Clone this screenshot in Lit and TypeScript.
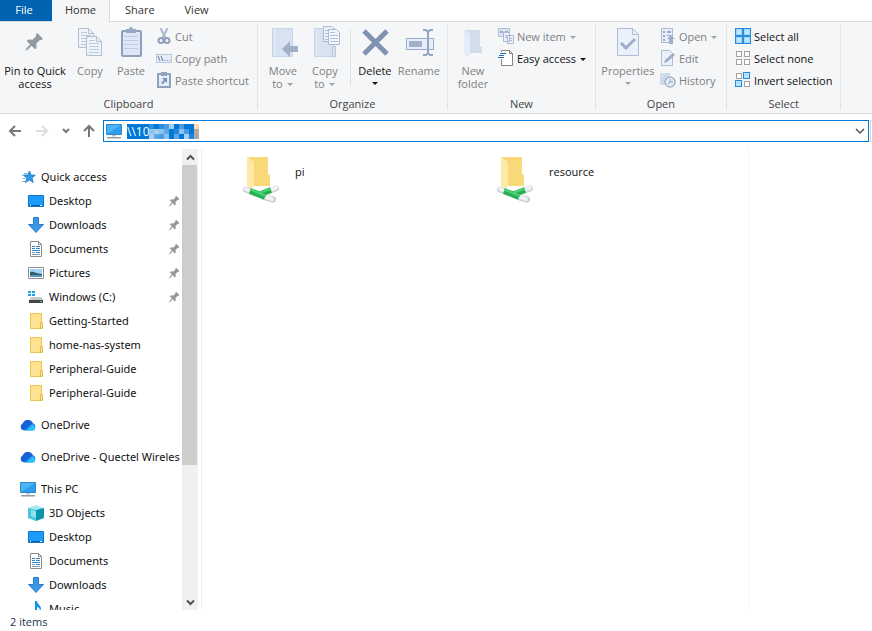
import { LitElement, html, css, svg, nothing, TemplateResult } from "lit";
import { customElement } from "lit/decorators.js";

const icon = (w: number, h: number, body: TemplateResult) =>
  html`<svg width=${w} height=${h} viewBox="0 0 ${w} ${h}" aria-hidden="true">${body}</svg>`;

const pinShape = svg`<g transform="rotate(45 10 10)" fill="#9199a1"><path d="M6 0h8v2l-1.300 1v5l3.300 3v2H4v-2l3.300-3V3L6 2z"/><path d="M9 12h2v6l-1 3-1-3z"/></g>`;
const smallPin = html`<svg class="pin" width="12" height="12" viewBox="-1 -1 20 20" aria-hidden="true">${pinShape}</svg>`;

const page = (x: number, y: number) => svg`<g transform="translate(${x} ${y})"><path d="M.5.500h10l5 5v14H.500z" fill="#eef3fb" stroke="#a9bad3"/><path d="M10.500.500v5h5" fill="none" stroke="#a9bad3"/><path d="M3 4.500h6M3 7.500h10M3 10.500h10M3 13.500h10M3 16.500h10" stroke="#b9c8de"/></g>`;
const sheet = svg`<path d="M.5.500h20v28H.500z" fill="#d5e1f1" stroke="#c3d2e6"/><path d="M3 1v27" stroke="#e2eaf6"/>`;

const big = {
  pin: icon(32, 32, svg`<g transform="translate(4 7)">${pinShape}</g>`),
  copy: icon(32, 32, svg`${page(4, 2)}${page(12, 10)}`),
  paste: icon(32, 32, svg`<rect x="7" y="5" width="19" height="25" rx="1" fill="#dbe6f5" stroke="#8497ba" stroke-width="2"/><path d="M11 3h3a2 2 0 0 1 4 0h3v4H11z" fill="#8fa1c1"/><path d="M9 10.500h14M9 14.500h14M9 18.500h14M9 22.500h14" stroke="#b9c9e0"/>`),
  move: icon(32, 32, svg`<g transform="translate(5 2)">${sheet}</g><path d="M15 23l8-8v5h8v6h-8v5z" fill="#98a9c6"/>`),
  copyTo: icon(32, 32, svg`<g transform="translate(5 2)">${sheet}</g><path d="M14.500.500h8l3 3v12h-11z" fill="#eef3fb" stroke="#a3b4ce"/><path d="M19.500 3.500h8l3 3v12h-11z" fill="#f3f7fd" stroke="#a3b4ce"/><path d="M16 4.500h3M16 7.500h3M16 10.500h3M16 13.500h3M21 6.500h5M21 9.500h8M21 12.500h8M21 15.500h8" stroke="#a9bad3"/><path d="M23.500 20.500h3v10h-3z" fill="#d5e1f1" stroke="#b3c3da"/>`),
  remove: icon(32, 32, svg`<path d="M5 5l23 23M28 5L5 28" stroke="#8192b3" stroke-width="5"/>`),
  rename: icon(32, 32, svg`<rect x="3.500" y="12.500" width="27" height="11" fill="#e6eefa" stroke="#8fa3c8"/><path d="M6 15h13v6H6z" fill="#9aabca"/><path d="M20 4h3l2 2 2-2h3M25 6v22M20 29h3l2-2 2 2h3" fill="none" stroke="#8b9dbf" stroke-width="2"/>`),
  folder: icon(32, 32, svg`<path d="M7 4h16v16l2 1v6H10z" fill="#cfdbe9"/><path d="M7 4l6 4v21l-3 2-3-3z" fill="#e3ecf7"/>`),
  properties: icon(32, 32, svg`<path d="M5.500 2.500h15l6 6v21h-21z" fill="#eaf1fb" stroke="#a5b6d0"/><path d="M20.500 2.500v6h6" fill="none" stroke="#a5b6d0"/><path d="M9 17l5 5 9-9" fill="none" stroke="#94a6c6" stroke-width="3"/>`),
};

const box = (x: number, y: number, on: boolean) =>
  svg`<rect x=${x + 0.5} y=${y + 0.5} width=${on ? 6 : 5} height=${on ? 6 : 5} fill=${on ? "#b7e1fc" : "#fff"} stroke=${on ? "#2b8cdc" : "#a2a2a2"}/>`;
const small = {
  cut: icon(16, 16, svg`<path d="M4.500 0l5 10M11.500 0l-5 10" stroke="#a4b3cb" stroke-width="2"/><circle cx="5" cy="12.500" r="2.500" fill="none" stroke="#8497b8" stroke-width="2"/><circle cx="11" cy="12.500" r="2.500" fill="none" stroke="#8497b8" stroke-width="2"/>`),
  path: icon(16, 16, svg`<rect x=".5" y="4.500" width="15" height="8" fill="#e6edf8" stroke="#b5c4db"/><path d="M2 6l2 5M5 6l2 5M8.500 10.500h1M11 10.500h1M13.300 10.500h1" stroke="#6e86ad" stroke-width="1.200"/>`),
  shortcut: icon(16, 16, svg`<rect x="2" y="2" width="12" height="13" fill="#e3ecf8" stroke="#8799ba" stroke-width="2"/><path d="M5 0h6v4H5z" fill="#8799ba"/><path d="M6 6h5v5L9.300 9.300 7 12 5 11l3-3z" fill="#7287ae"/>`),
  newItem: icon(16, 16, svg`<path d="M.5.500h11v8H.500z" fill="#d9e3f1" stroke="#a9b9d0"/><path d="M2 3h3v2H2zM7 3h3v2H7z" fill="#91a4c3"/><path d="M5.500 4.500h6v9h-6zM9.500 7.500h6v8h-6z" fill="#eef3fb" stroke="#a3b4ce"/><path d="M7 7.500h2M7 9.500h2M11 10.500h3M11 12.500h3" stroke="#a3b4ce"/>`),
  easy: icon(16, 16, svg`<path d="M3.500.500h8l3 3v12h-11z" fill="#fff" stroke="#858585"/><path d="M11.500.500v3h3" fill="none" stroke="#858585"/><path d="M1 2h7v7H0z" fill="#fff"/><path d="M2 3.500h6M1 5.500h5M0 7.500h6" stroke="#1e6fc0"/>`),
  open: icon(16, 16, svg`<path d="M1.500.500h11v14h-11z" fill="#e8effa" stroke="#a4b5cf"/><path d="M3 3h2v2H3zM3 7h2v2H3zM3 11h2v2H3zM7 3h4v2H7zM7 7h4v1H7z" fill="#8b9fbf"/><path d="M11 7l4 4h-2v5H9v-5H7z" fill="#96a8c7"/>`),
  edit: icon(16, 16, svg`<path d="M1.500.500h8l3 3v12h-11z" fill="#eaf1fb" stroke="#a9bad3"/><path d="M4 13l1-3 8-7 2 2-8 7z" fill="#94a6c5"/>`),
  history: icon(16, 16, svg`<path d="M0 1h10v12H0z" fill="#cbd8ea"/><circle cx="10" cy="10" r="5" fill="#e3ebf6" stroke="#9aabc7" stroke-width="1.500"/><path d="M10 7v3h3M10 10l-2 2" fill="none" stroke="#8396b8"/>`),
  all: icon(16, 16, svg`<path d="M0 0h16v16H0z" fill="#2b8cdc"/><path d="M1 1h6v6H1zM9 1h6v6H9zM1 9h6v6H1zM9 9h6v6H9z" fill="#9fd8fb"/><path d="M2 2h4v4H2zM10 2h4v4h-4zM2 10h4v4H2zM10 10h4v4h-4z" fill="#c3e8fd"/>`),
  none: icon(16, 16, svg`${box(1, 1, false)}${box(9, 1, false)}${box(1, 9, false)}${box(9, 9, false)}`),
  invert: icon(16, 16, svg`${box(1, 1, false)}${box(8, 0, true)}${box(0, 8, true)}${box(9, 9, false)}`),
};

const monitor = icon(16, 16, svg`<path d="M.5 1.500h15v10H.500z" fill="#4cb5f8" stroke="#3286c6"/><path d="M1 11L15 2v9z" fill="#2d9df0"/><path d="M6 12h4v1.500H6z" fill="#b9c4cd"/><path d="M1 14h14v1.500H1z" fill="#8e9fac"/>`);
const cloud = icon(16, 16, svg`<path d="M4 13.500a4 4 0 0 1-1-7.300 5.300 5.300 0 0 1 9.700-.200A4 4 0 0 1 13 13.500z" fill="#1c86ee"/><path d="M3 6.200a5.300 5.300 0 0 1 9.600-.400L5 12.800 2 12.700A4 4 0 0 1 3 6.200z" fill="#1a5fd8"/><path d="M6 13.500l6.500-6a3.300 3.300 0 0 1 1 6z" fill="#2bc0fa"/>`);
const tree = {
  star: icon(16, 16, svg`<path d="M9.500 2l1.500 4 4.300.2-3.300 2.700 1.200 4.600-3.800-2.500-4 2.600 1.400-4.700-3.500-2.700 4.400-.2z" fill="#2f9ae6" stroke="#1b76bd" stroke-width=".8"/><path d="M4 4.500h3M2 6.500h2M3 9.500h2M2 12.500h3" stroke="#6bb8ee"/>`),
  desktop: icon(16, 16, svg`<path d="M.5 2.500h15v11H.500z" fill="#1c9bfb" stroke="#0f74c5"/><path d="M1 12.500h14" stroke="#0b5ea5"/><path d="M2 12.500h1M12 12.500h2" stroke="#fff"/>`),
  down: icon(16, 16, svg`<path d="M5.500.500h5v7h5L8 15.500.500 7.500h5z" fill="#3b96e4" stroke="#2b7cc9"/>`),
  doc: icon(16, 16, svg`<path d="M2.500.500h8l3 3v12h-11z" fill="#fff" stroke="#8b8b8b"/><path d="M10.500.500v3h3" fill="none" stroke="#8b8b8b"/><path d="M4 5.500h3M8 5.500h4M4 7.500h3M8 7.500h4M4 9.500h8M8 11.500h4" stroke="#2d86cc"/><path d="M4 13.500h8M4 11.500h3" stroke="#8a9aa8"/>`),
  picture: icon(16, 16, svg`<path d="M.5 2.500h15v11H.500z" fill="#fff" stroke="#8e8e8e"/><path d="M2 4h12v8H2z" fill="#a6d2f2"/><path d="M2 7c4-1 6 2 12 2v3H2z" fill="#315f72"/><path d="M2 10h12v2H2z" fill="#5597bd"/>`),
  drive: icon(16, 16, svg`<path d="M0 2h3v2H0zM4 2h3v2H4zM0 5h3v2H0zM4 5h3v2H4z" fill="#15a5ea"/><path d="M3 8h10l2 3H1z" fill="#c6c9cc"/><path d="M1 11h14v3H1z" fill="#424649"/><path d="M12 12h2v1h-2z" fill="#3be06a"/>`),
  folder: icon(16, 16, svg`<path d="M2.500.500h11v15h-11z" fill="#ffe391" stroke="#eac556"/><path d="M12.500 9.500h2v6h-2z" fill="#ffeaaa" stroke="#e3b83f"/>`),
  cloud,
  pc: monitor,
  cube: icon(16, 16, svg`<path d="M8 0l8 3-8 3-8-3z" fill="#a4e9f1"/><path d="M0 3l8 2v11l-8-3z" fill="#49c6da"/><path d="M8 5l8-2v10l-8 3z" fill="#1094ae"/><path d="M3 5l5 1.500V13l-5-2z" fill="#8fe3ec"/>`),
  music: icon(16, 16, svg`<path d="M7 0h2c0 3 4 4 4 8l-1 2c0-3-2-4-3-4v7a3 3 0 1 1-2-3z" fill="#1594e0"/>`),
};

const netFolder = html`<svg width="48" height="48" viewBox="0 0 48 48" aria-hidden="true">
  <path d="M8 1h20v17l2 1v11H12z" fill="#f8d878"/><path d="M7 1l7 5v23l-2 4-5-3z" fill="#ffe9a6"/>
  <g stroke="#c9ccd0" stroke-width="6" stroke-linecap="round"><path d="M6 33.500l5 2"/><path d="M30 34.500l6-2"/><path d="M26 41.500l7 2"/></g>
  <g stroke="#f1f2f3" stroke-width="4" stroke-linecap="round"><path d="M6 33l5 2"/><path d="M30 34l6-2"/><path d="M26 41l6 2"/></g>
  <g stroke="#27ae52" stroke-width="6"><path d="M10 35l15 6"/><path d="M18 39l13-5"/></g>
  <g stroke="#4ad375" stroke-width="2"><path d="M10 33.500l16 6.500"/><path d="M20 36.500l10-3.500"/></g></svg>`;

const caret = html`<i class="caret"></i>`;

interface Node { label: string; icon: keyof typeof tree; root?: boolean; gap?: boolean; pinned?: boolean }
const nodes: Node[] = [
  { label: "Quick access", icon: "star", root: true },
  { label: "Desktop", icon: "desktop", pinned: true },
  { label: "Downloads", icon: "down", pinned: true },
  { label: "Documents", icon: "doc", pinned: true },
  { label: "Pictures", icon: "picture", pinned: true },
  { label: "Windows (C:)", icon: "drive", pinned: true },
  { label: "Getting-Started", icon: "folder" },
  { label: "home-nas-system", icon: "folder" },
  { label: "Peripheral-Guide", icon: "folder" },
  { label: "Peripheral-Guide", icon: "folder" },
  { label: "OneDrive", icon: "cloud", root: true, gap: true },
  { label: "OneDrive - Quectel Wireles", icon: "cloud", root: true, gap: true },
  { label: "This PC", icon: "pc", root: true, gap: true },
  { label: "3D Objects", icon: "cube" },
  { label: "Desktop", icon: "desktop" },
  { label: "Documents", icon: "doc" },
  { label: "Downloads", icon: "down" },
  { label: "Music", icon: "music" },
];

const mosaic = [
  ["#2b8ddd", "#0078d7", "#2b8ddd", "#4a9be0", "#a6cdf2", "#0078d7", "#4a9be0", "#0078d7", "#0078d7", "#ffd9b8"],
  ["#8cc2ee", "#a6cdf2", "#8cc2ee", "#5aa9e6", "#0078d7", "#2585dc", "#8cc2ee", "#4a9be0", "#0078d7", "#b5a9a0"],
  ["#a6cdf2", "#5aa9e6", "#4a9be0", "#8cc2ee", "#0078d7", "#5aa9e6", "#0078d7", "#a6cdf2", "#2585dc", "#a8a8a8"],
];

@customElement("app-root")
export class AppRoot extends LitElement {
  static styles = css`
    :host { display: flex; flex-direction: column; height: 100vh; background: #fff; color: #111; font: 11px/13px "Open Sans", "Noto Sans", sans-serif; overflow: hidden; }
    * { box-sizing: border-box; }
    button, input { font: inherit; color: inherit; border: 0; padding: 0; margin: 0; background: none; }
    svg { display: block; flex: none; }
    .tabs { display: flex; height: 22px; border-bottom: 1px solid #dadbdc; flex: none; }
    .tab { height: 21px; padding: 0 15px 2px; color: #333; }
    .tab.file { width: 52px; padding: 0 4px 2px 0; background: #0063b1; color: #fff; }
    .tab.active { width: 58px; height: 22px; padding: 0 0 3px; background: #f5f6f7; border-right: 1px solid #dadbdc; }
    .ribbon { display: flex; flex: none; height: 92px; padding: 2px 0 3px; background: #f5f6f7; border-bottom: 1px solid #dadbdc; }
    .group { display: flex; flex-direction: column; justify-content: space-between; flex: none; border-right: 1px solid #e2e3e4; }
    .tools { display: flex; padding: 1px 0 0 4px; }
    .tools.flush { padding-left: 0; }
    .tools.end { padding-right: 8px; }
    .caption { text-align: center; color: #444; line-height: 12px; }
    .big { display: flex; flex-direction: column; align-items: center; width: 40px; padding-top: 1px; white-space: nowrap; }
    .big svg { margin-bottom: 6px; }
    .w42 { width: 42px; }
    .w48 { width: 48px; }
    .w56 { width: 56px; }
    .w70 { width: 70px; }
    .stack { display: flex; flex-direction: column; padding: 0 8px 0 4px; }
    .row { display: flex; align-items: center; gap: 3px; height: 22px; white-space: nowrap; }
    .off { color: #808080; }
    .off svg { opacity: 0.9; }
    .caret { display: inline-block; width: 0; border: 3px solid transparent; border-top-color: currentColor; border-bottom: 0; margin: 0 1px; vertical-align: 2px; }
    .off .caret { opacity: 0.7; }
    .big > .caret { margin-top: 5px; }
    .sep { width: 1px; margin: 5px 0 0 4px; height: 56px; background: #e0e1e2; }
    .nav { display: flex; align-items: center; flex: none; height: 34px; }
    .arrows { display: flex; align-items: center; justify-content: space-between; width: 103px; padding: 0 8px; }
    .address { display: flex; align-items: center; flex: 1; height: 22px; border: 1px solid #0078d7; padding: 0 3px 0 2px; }
    .address input { width: 22px; height: 15px; margin-left: 5px; background: #0078d7; color: #fff; font-size: 12px; }
    .edge { width: 2px; height: 22px; margin-left: 1px; border: 1px solid #d9d9d9; border-right: 0; }
    .fill { flex: 1; }
    .main { display: flex; flex: 1; min-height: 0; }
    .side { display: flex; width: 202px; flex: none; border-right: 1px solid #f1f1f1; padding-right: 3px; }
    .tree { flex: 1; min-width: 0; overflow: hidden; padding-top: 17px; font-family: "Noto Sans", "Open Sans", sans-serif; }
    .node { display: flex; align-items: center; gap: 5px; height: 24px; padding: 0 3px 0 28px; color: #111; text-decoration: none; white-space: nowrap; }
    .node span { padding-bottom: 2px; }
    .node.root { padding: 0 0 0 20px; }
    .node.gap { margin-top: 8px; }
    .pin { margin-left: auto; }
    .scroll { display: flex; flex-direction: column; width: 16px; margin-top: 1px; background: #f0f0f0; }
    .scroll button { height: 16px; display: grid; place-items: center; }
    .track { flex: 1; }
    .thumb { height: 70%; width: 15px; background: #cdcdcd; }
    .files { display: grid; grid-template-columns: 254px 254px; align-content: start; flex: 1; padding: 8px 0 0 38px; border-right: 1px solid #f4f4f4; }
    .item { display: flex; gap: 7px; color: #111; text-decoration: none; }
    .item span { padding-top: 9px; }
    .preview { width: 124px; flex: none; }
    .status { flex: none; height: 21px; padding: 5px 10px 0; color: #1e3250; }
  `;

  private row(name: keyof typeof small, label: string, off = true, drop = false) {
    return html`<button class="row ${off ? "off" : ""}">${small[name]}<span>${label}${drop ? html` ${caret}` : nothing}</span></button>`;
  }

  private large(name: keyof typeof big, label: unknown, cls = "off") {
    return html`<button class="big ${cls}">${big[name]}<span>${label}</span></button>`;
  }

  render() {
    return html`
      <nav class="tabs">
        <button class="tab file">File</button><button class="tab active">Home</button
        ><button class="tab">Share</button><button class="tab">View</button>
      </nav>
      <section class="ribbon">
        <div class="group">
          <div class="tools flush">
            ${this.large("pin", html`Pin to Quick<br />access`, "w70")}
            ${this.large("copy", "Copy")}${this.large("paste", "Paste", "off w42")}
            <div class="stack">${this.row("cut", "Cut")}${this.row("path", "Copy path")}${this.row("shortcut", "Paste shortcut")}</div>
          </div>
          <div class="caption">Clipboard</div>
        </div>
        <div class="group">
          <div class="tools end">
            ${this.large("move", html`Move<br />to ${caret}`, "off w42")}${this.large("copyTo", html`Copy<br />to ${caret}`, "off w42")}
            <div class="sep"></div>
            <button class="big w48">${big.remove}<span>Delete</span>${caret}</button>
            ${this.large("rename", "Rename")}
          </div>
          <div class="caption">Organize</div>
        </div>
        <div class="group">
          <div class="tools">
            ${this.large("folder", html`New<br />folder`, "off w42")}
            <div class="stack">${this.row("newItem", "New item", true, true)}${this.row("easy", "Easy access", false, true)}</div>
          </div>
          <div class="caption">New</div>
        </div>
        <div class="group">
          <div class="tools">
            <button class="big w56 off">${big.properties}<span>Properties</span>${caret}</button>
            <div class="stack">${this.row("open", "Open", true, true)}${this.row("edit", "Edit")}${this.row("history", "History")}</div>
          </div>
          <div class="caption">Open</div>
        </div>
        <div class="group">
          <div class="tools">
            <div class="stack">${this.row("all", "Select all", false)}${this.row("none", "Select none", false)}${this.row("invert", "Invert selection", false)}</div>
          </div>
          <div class="caption">Select</div>
        </div>
      </section>
      <div class="nav">
        <div class="arrows">
          <button aria-label="Back">${icon(14, 14, svg`<path d="M13 7H2M7 2L2 7l5 5" fill="none" stroke="#777" stroke-width="2"/>`)}</button>
          <button aria-label="Forward">${icon(14, 14, svg`<path d="M1 7h11M7 2l5 5-5 5" fill="none" stroke="#dedede" stroke-width="2"/>`)}</button>
          <button aria-label="Recent locations">${icon(8, 6, svg`<path d="M1 1l3 3 3-3" fill="none" stroke="#777" stroke-width="2"/>`)}</button>
          <button aria-label="Up">${icon(12, 14, svg`<path d="M6 13V2M1 7l5-5 5 5" fill="none" stroke="#777" stroke-width="2"/>`)}</button>
        </div>
        <div class="address">
          ${monitor}
          <input aria-label="Address" .value=${"\\\\10"} />
          <svg width="50" height="15" viewBox="0 0 50 15" aria-hidden="true">
            ${mosaic.map((line, y) => line.map((c, x) => svg`<rect x=${x * 5} y=${y * 5} width="5" height="5" fill=${c} />`))}
          </svg>
          <div class="fill"></div>
          <button aria-label="Show addresses">${icon(10, 8, svg`<path d="M1 2l4 4 4-4" fill="none" stroke="#555" stroke-width="1.500"/>`)}</button>
        </div>
        <div class="edge"></div>
      </div>
      <div class="main">
        <div class="side">
          <nav class="tree">
            ${nodes.map((n) => html`<a href="#" class="node ${n.root ? "root" : ""} ${n.gap ? "gap" : ""}">${tree[n.icon]}<span>${n.label}</span>${n.pinned ? smallPin : nothing}</a>`)}
          </nav>
          <div class="scroll">
            <button aria-label="Scroll up">${icon(9, 7, svg`<path d="M1 5.500L4.500 2 8 5.500" fill="none" stroke="#505050" stroke-width="2"/>`)}</button>
            <div class="track"><div class="thumb"></div></div>
            <button aria-label="Scroll down">${icon(9, 7, svg`<path d="M1 1.500L4.500 5 8 1.500" fill="none" stroke="#505050" stroke-width="2"/>`)}</button>
          </div>
        </div>
        <main class="files">
          <a class="item" href="#">${netFolder}<span>pi</span></a>
          <a class="item" href="#">${netFolder}<span>resource</span></a>
        </main>
        <aside class="preview"></aside>
      </div>
      <footer class="status">2 items</footer>
    `;
  }
}
